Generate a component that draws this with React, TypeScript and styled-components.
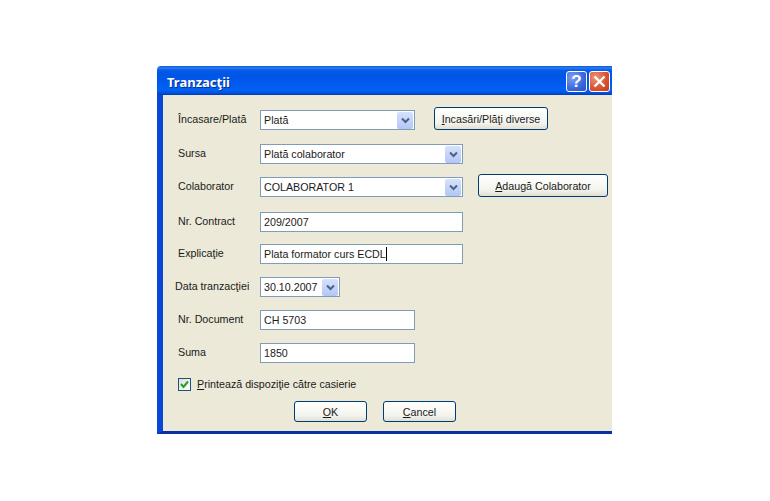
import styled, { createGlobalStyle } from 'styled-components'

const Global = createGlobalStyle`
  html, body {
    margin: 0;
    padding: 0;
    background: #fff;
  }
`

const Page = styled.div`
  width: 770px;
  height: 501px;
  padding: 66px 0 0 157px;
  box-sizing: border-box;
  overflow: hidden;
  font-family: "Liberation Sans", Arial, sans-serif;
  font-size: 10.7px;
  color: #1a1a1a;
`

const Dialog = styled.div`
  width: 455px;
  height: 368px;
  display: flex;
  flex-direction: column;
`

const TitleBar = styled.div`
  height: 29px;
  flex: none;
  display: flex;
  align-items: center;
  justify-content: space-between;
  box-sizing: border-box;
  padding: 2px 2px 0 10px;
  border-top-left-radius: 4px;
  background: linear-gradient(
    #0a5ad8 0,
    #2a7cf6 2px,
    #0a5ce8 4px,
    #0055e5 8px,
    #0058ee 16px,
    #0062f4 24px,
    #0152dc 27px,
    #003bb0 29px
  );
`

const Title = styled.div`
  font-family: "Noto Sans", sans-serif;
  font-weight: bold;
  font-size: 13px;
  color: #fff;
  text-shadow: 1px 1px 0 #0a2f8c;
`

const TitleButtons = styled.div`
  display: flex;
  gap: 2px;
`

const CaptionButton = styled.div<{ $close?: boolean }>`
  width: 21px;
  height: 21px;
  box-sizing: border-box;
  border: 1px solid #fff;
  border-radius: 3px;
  display: flex;
  align-items: center;
  justify-content: center;
  color: #fff;
  font-weight: bold;
  font-size: 17px;
  background: ${(p) =>
    p.$close
      ? 'radial-gradient(circle at 30% 30%, #ee9478, #d9512e 60%, #c23a1c)'
      : 'radial-gradient(circle at 30% 30%, #7fa0f2, #3a66dc 60%, #2c50c4)'};
`

const Body = styled.div`
  flex: 1;
  display: flex;
  flex-direction: column;
  background: #ece9d8;
  border-left: 6px solid #0a46d8;
  border-bottom: 3px solid #0831a8;
  padding: 15px 0 0 0;
`

const Row = styled.div<{ $top?: number; $height?: number }>`
  display: flex;
  align-items: center;
  height: ${(p) => p.$height ?? 20}px;
  margin-top: ${(p) => p.$top ?? 0}px;
`

const Label = styled.div<{ $nudge?: number }>`
  width: 97px;
  flex: none;
  box-sizing: border-box;
  padding-left: ${(p) => p.$nudge ?? 15}px;
  padding-bottom: 3px;
  white-space: nowrap;
`

const Field = styled.div<{ $width: number }>`
  width: ${(p) => p.$width}px;
  height: 20px;
  flex: none;
  box-sizing: border-box;
  background: #fff;
  border: 1px solid #7f9db9;
  display: flex;
  align-items: center;
  justify-content: space-between;
  padding: 0 0 0 3px;
  white-space: nowrap;
`

const Caret = styled.span`
  display: inline-block;
  width: 1px;
  height: 14px;
  background: #000;
  vertical-align: -3px;
`

const Arrow = styled.div`
  width: 16px;
  height: 17px;
  flex: none;
  margin-right: 1px;
  border-radius: 2px;
  background: linear-gradient(#d6e2fc, #b2c6f6);
  display: flex;
  align-items: center;
  justify-content: center;
`

const PushButton = styled.div<{ $width: number; $gap?: number; $height?: number }>`
  width: ${(p) => p.$width}px;
  height: ${(p) => p.$height ?? 23}px;
  flex: none;
  align-self: flex-end;
  box-sizing: border-box;
  margin-left: ${(p) => p.$gap ?? 0}px;
  border: 1px solid #003c74;
  border-radius: 3px;
  background: linear-gradient(#fff, #f4f4ee 70%, #e2dfd2);
  display: flex;
  align-items: center;
  justify-content: center;
  white-space: nowrap;
`

const Key = styled.span`
  text-decoration: underline;
`

const CheckBox = styled.div`
  width: 13px;
  height: 13px;
  flex: none;
  box-sizing: border-box;
  margin: 0 6px 0 15px;
  border: 1px solid #1c5180;
  background: linear-gradient(135deg, #dcdcd7, #fff);
  display: flex;
  align-items: center;
  justify-content: center;
`

const Actions = styled.div`
  display: flex;
  gap: 16px;
  margin: 10px 0 0 131px;
`

const Chevron = () => (
  <svg width="9" height="7" viewBox="0 0 9 7">
    <path d="M1 1.5 L4.5 5 L8 1.5" fill="none" stroke="#4d6185" strokeWidth="2" />
  </svg>
)

const Tick = () => (
  <svg width="9" height="9" viewBox="0 0 9 9">
    <path d="M1 4 L3.5 7 L8 1.5" fill="none" stroke="#21a121" strokeWidth="2" />
  </svg>
)

const Cross = () => (
  <svg width="13" height="13" viewBox="0 0 13 13">
    <path d="M1.5 1.5 L11.5 11.5 M11.5 1.5 L1.5 11.5" stroke="#fff" strokeWidth="2.4" />
  </svg>
)

export default function App() {
  return (
    <Page>
      <Global />
      <Dialog>
        <TitleBar>
          <Title>Tranzacţii</Title>
          <TitleButtons>
            <CaptionButton>?</CaptionButton>
            <CaptionButton $close>
              <Cross />
            </CaptionButton>
          </TitleButtons>
        </TitleBar>
        <Body>
          <Row>
            <Label>Încasare/Plată</Label>
            <Field $width={155}>
              Plată
              <Arrow>
                <Chevron />
              </Arrow>
            </Field>
            <PushButton $width={114} $gap={19}>
              <span>
                <Key>I</Key>ncasări/Plăţi diverse
              </span>
            </PushButton>
          </Row>
          <Row $top={14}>
            <Label>Sursa</Label>
            <Field $width={203}>
              Plată colaborator
              <Arrow>
                <Chevron />
              </Arrow>
            </Field>
          </Row>
          <Row $top={13}>
            <Label>Colaborator</Label>
            <Field $width={203}>
              COLABORATOR 1
              <Arrow>
                <Chevron />
              </Arrow>
            </Field>
            <PushButton $width={130} $gap={15}>
              <span>
                <Key>A</Key>daugă Colaborator
              </span>
            </PushButton>
          </Row>
          <Row $top={15}>
            <Label>Nr. Contract</Label>
            <Field $width={203}>209/2007</Field>
          </Row>
          <Row $top={12}>
            <Label>Explicaţie</Label>
            <Field $width={203}>
              <span>
                Plata formator curs ECDL
                <Caret />
              </span>
            </Field>
          </Row>
          <Row $top={13}>
            <Label $nudge={12}>Data tranzacţiei</Label>
            <Field $width={80}>
              30.10.2007
              <Arrow>
                <Chevron />
              </Arrow>
            </Field>
          </Row>
          <Row $top={13}>
            <Label>Nr. Document</Label>
            <Field $width={155}>CH 5703</Field>
          </Row>
          <Row $top={13}>
            <Label>Suma</Label>
            <Field $width={155}>1850</Field>
          </Row>
          <Row $top={14} $height={14}>
            <CheckBox>
              <Tick />
            </CheckBox>
            <span>
              <Key>P</Key>rintează dispoziţie către casierie
            </span>
          </Row>
          <Actions>
            <PushButton $width={73} $height={21}>
              <span>
                <Key>O</Key>K
              </span>
            </PushButton>
            <PushButton $width={73} $height={21}>
              <span>
                <Key>C</Key>ancel
              </span>
            </PushButton>
          </Actions>
        </Body>
      </Dialog>
    </Page>
  )
}
